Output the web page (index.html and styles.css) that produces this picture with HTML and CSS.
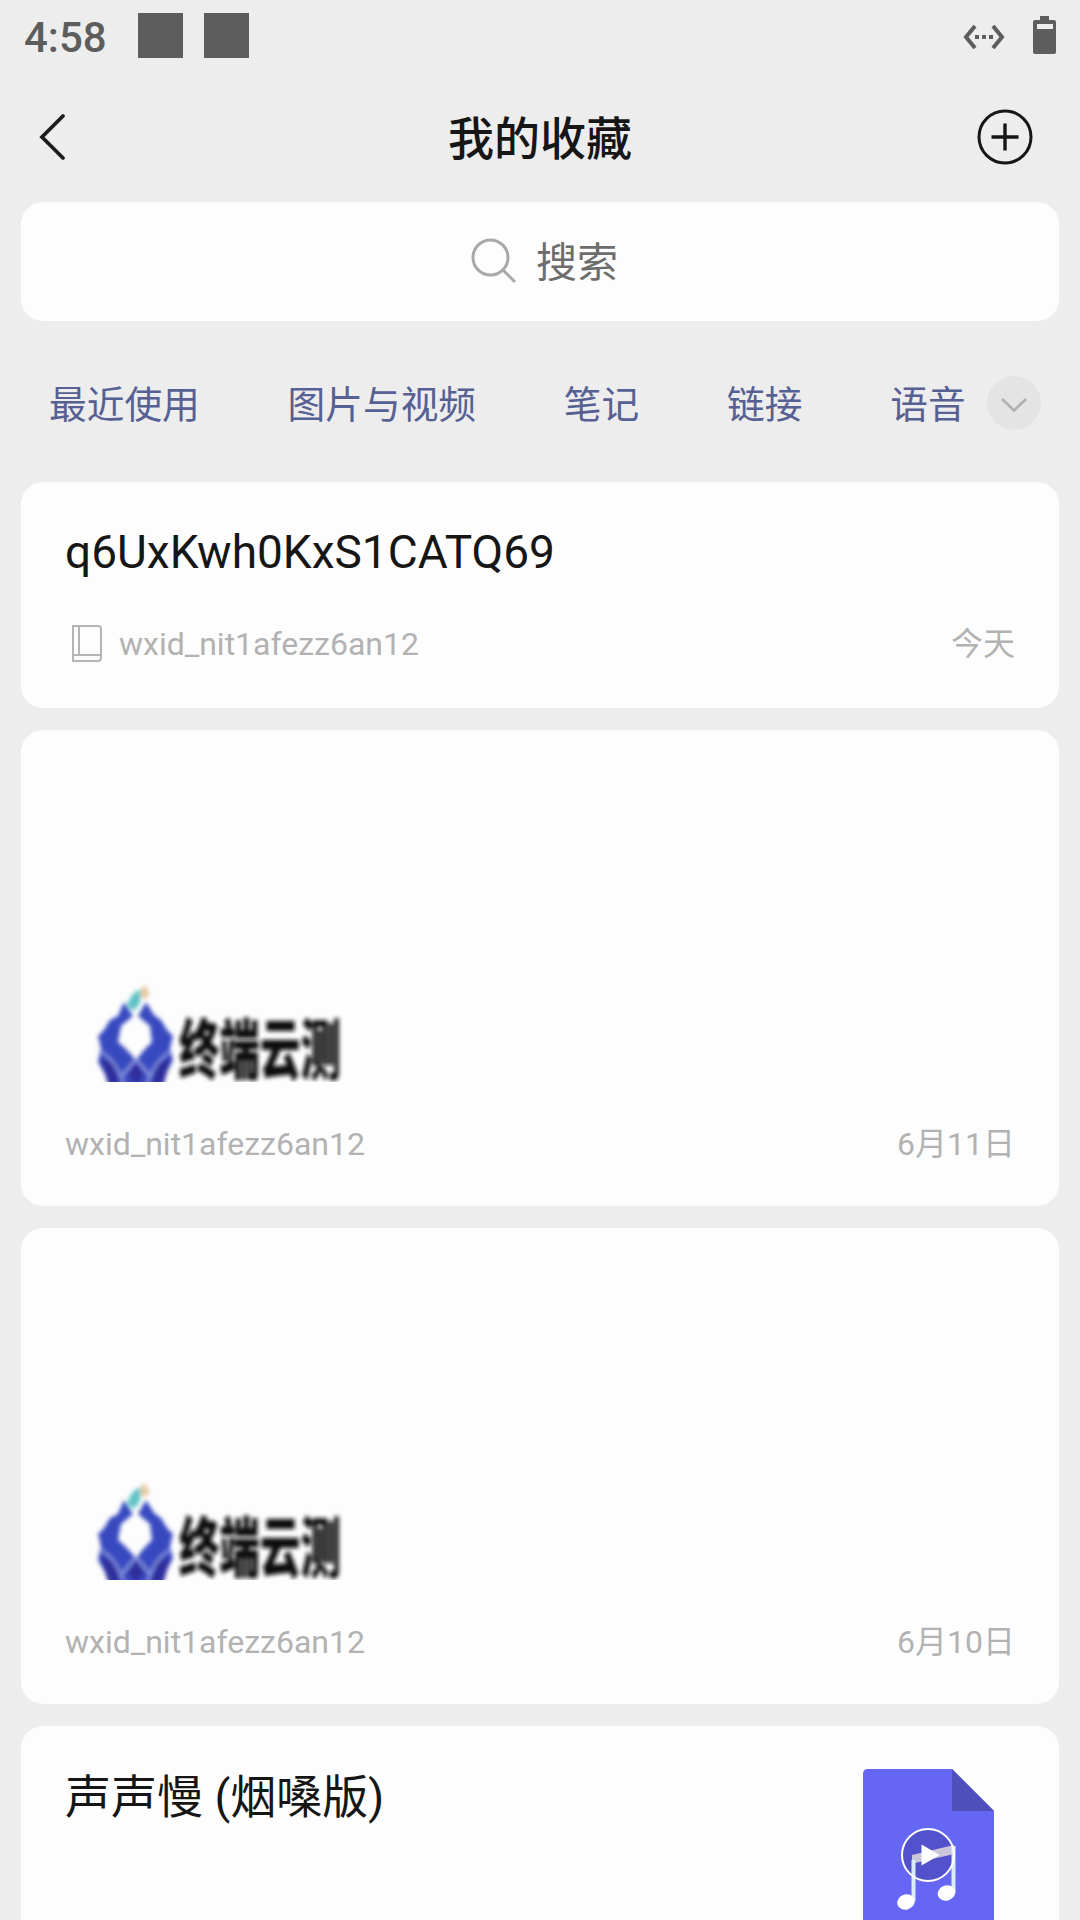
FILE: index.html
```html
<!DOCTYPE html>
<html lang="zh-CN">
<head>
<meta charset="utf-8">
<title>我的收藏</title>
<link rel="stylesheet" href="styles.css">
</head>
<body>
<svg class="defs" width="0" height="0" aria-hidden="true">
  <defs>
    <filter id="soft" x="-5%" y="-5%" width="110%" height="110%"><feGaussianBlur stdDeviation="1.9"/></filter>
    <clipPath id="crop"><rect x="0" y="0" width="300" height="100"/></clipPath>
    <symbol id="brand" viewBox="0 0 300 110">
      <g clip-path="url(#crop)">
        <g filter="url(#soft)">
          <path d="M59 20 L68 34 L56 44 L53 60 L60 66 L71 78 L80 67 L87 60 L85 44 L73 34 L81 20 L89 33 L96 38 L102 48 L108 54 L105 66 L108 78 L101 92 L98 104 H44 L40 92 L33 80 L36 66 L33 54 L39 48 L45 38 L53 34Z" fill="#374ac0"/>
          <path d="M35 76 L49 82 L55 104 H44Z M106 76 L92 82 L86 104 H98Z M71 80 L79 92 L71 104 L63 92Z" fill="#2f2d9c"/>
          <path d="M35 69 Q53 80 59 104 M106 69 Q88 80 82 104 M71 77 L57 94 M71 77 L85 94" stroke="#97a4e6" stroke-width="2" fill="none"/>
          <path d="M62 24 Q65 11 76 7 L75 21 L69 29Z" fill="#5fc3c6"/>
          <path d="M79 2 L85 12 L79 18 L75 12Z" fill="#e4c9a0"/>
          <text class="brand-text" transform="translate(114 92) scale(1 1.640)">终端云测</text>
        </g>
      </g>
    </symbol>
  </defs>
</svg>
<div class="screen">
  <div class="status">
    <span class="clock">4:58</span>
    <span class="notice"></span>
    <span class="notice"></span>
    <svg class="ethernet" width="44" height="28" viewBox="0 0 44 28" fill="none" stroke="#5d5d5d" stroke-width="4">
      <path d="M13 3 L4 14 L13 25 M31 3 L40 14 L31 25"/>
      <path d="M13 14h4M20 14h4M27 14h4"/>
    </svg>
    <svg class="battery" width="23" height="38" viewBox="0 0 23 38"><path fill="#5d5d5d" fill-rule="evenodd" d="M7 0h9v4h5a2 2 0 0 1 2 2v30a2 2 0 0 1-2 2H2a2 2 0 0 1-2-2V6a2 2 0 0 1 2-2h5zM4 8v5h16V8z"/></svg>
  </div>
  <header class="nav">
    <svg width="30" height="50" viewBox="0 0 30 50" fill="none" stroke="#1e1e1e" stroke-width="3.800" stroke-linecap="round"><path d="M25 4 L4 25 L25 46"/></svg>
    <h1>我的收藏</h1>
    <svg width="56" height="56" viewBox="0 0 56 56" fill="none" stroke="#161616" stroke-width="3"><circle cx="28" cy="28" r="26"/><path d="M14.500 28h27M28 14.500v27" stroke-width="3.400"/></svg>
  </header>
  <div class="search">
    <svg width="48" height="48" viewBox="0 0 48 48" fill="none" stroke="#a8a8a8" stroke-width="3"><circle cx="21.500" cy="21.500" r="17.500"/><path d="M34 34 L46 46"/></svg>
    <span>搜索</span>
  </div>
  <nav class="tabs">
    <span>最近使用</span><span>图片与视频</span><span>笔记</span><span>链接</span><span>语音</span>
    <svg width="54" height="54" viewBox="0 0 54 54"><circle cx="27" cy="27" r="27" fill="#e4e4e4"/><path d="M15 23 L27 34.500 L39 23" fill="none" stroke="#b0b0b0" stroke-width="2.600"/></svg>
  </nav>
  <main class="list">
    <article class="card note">
      <h2>q6UxKwh0KxS1CATQ69</h2>
      <div class="meta">
        <svg class="book" width="54" height="40" viewBox="0 0 54 40" fill="none" stroke="#b5b5b5" stroke-width="2"><path d="M8 2h25a3 3 0 0 1 3 3v29a3 3 0 0 1-3 3H8zM14 2v29M8 31h28"/></svg>
        <span>wxid_nit1afezz6an12</span><time>今天</time>
      </div>
    </article>
    <article class="card picture">
      <svg class="logo" width="300" height="110"><use href="#brand"/></svg>
      <div class="meta"><span>wxid_nit1afezz6an12</span><time>6月11日</time></div>
    </article>
    <article class="card picture">
      <svg class="logo" width="300" height="110"><use href="#brand"/></svg>
      <div class="meta"><span>wxid_nit1afezz6an12</span><time>6月10日</time></div>
    </article>
    <article class="card song">
      <h2>声声慢 (烟嗓版)</h2>
      <svg width="131" height="170" viewBox="0 0 131 170">
        <path d="M5 0H89L131 42V170H0V5Q0 0 5 0Z" fill="#6666f4"/>
        <path d="M89 0L131 42H89Z" fill="#5050bd"/>
        <circle cx="65" cy="86" r="26" fill="#5252cc"/>
        <path d="M49 86L91 76V85L52 94V131H49Z" fill="#cbc5d9"/>
        <path d="M50.500 91V132M90.500 77V124" stroke="#d9ecff" stroke-width="4"/>
        <ellipse cx="43" cy="133" rx="9" ry="7.500" transform="rotate(-18 43 133)" fill="#fff"/>
        <ellipse cx="83.500" cy="124" rx="9" ry="7.500" transform="rotate(-18 83.500 124)" fill="#fff"/>
        <circle cx="65" cy="86" r="26" fill="none" stroke="#fff" stroke-width="2"/>
        <path d="M58.500 75.500L76.500 86L58.500 96.500Z" fill="#fff"/>
      </svg>
    </article>
  </main>
</div>
</body>
</html>
```
FILE: styles.css
```css
* { box-sizing: border-box; margin: 0; padding: 0; }
body {
  background: #ededed;
  font-family: Roboto, "Noto Sans CJK SC", sans-serif;
  color: #161616;
}
svg { display: block; flex: none; }
.defs { position: absolute; }
.screen {
  width: 1080px;
  height: 1920px;
  overflow: hidden;
  display: flex;
  flex-direction: column;
}
.screen > * { flex: none; }
.status {
  height: 72px;
  padding: 0 24px;
  display: flex;
  align-items: center;
  color: #5d5d5d;
}
.clock { width: 93px; font-size: 42px; font-weight: 500; line-height: 50px; margin-top: 4px; }
.notice { width: 45px; height: 45px; margin: 0 0 1px 21px; background: #5d5d5d; }
.ethernet { margin-left: auto; margin-right: 27px; margin-top: 1px; }
.battery { margin-bottom: 2px; }
.nav {
  height: 130px;
  padding: 0 47px 0 38px;
  display: grid;
  grid-template-columns: 56px 1fr 56px;
  align-items: center;
}
.nav h1 { font-size: 46px; font-weight: 500; line-height: 60px; text-align: center; padding: 4px 0 0 9px; }
.search {
  margin: 0 21px;
  height: 119px;
  border-radius: 22px;
  background: #fdfdfd;
  display: flex;
  align-items: center;
  padding: 0 0 3px 448px;
  gap: 19px;
  color: #6d6d6d;
  font-size: 41px;
}
.search span { margin-bottom: 2px; }
.tabs {
  height: 161px;
  padding: 0 39px 0 49px;
  display: flex;
  align-items: center;
  gap: 87.8px;
  font-size: 37.7px;
  color: #576092;
  white-space: nowrap;
}
.tabs svg { margin-left: auto; margin-top: 2px; }
.tabs span:last-of-type { margin-right: -88px; }
.list { display: flex; flex-direction: column; gap: 22px; }
.card {
  margin: 0 21px;
  padding: 0 44px;
  border-radius: 22px;
  background: #fdfdfd;
}
.card h2 { font-size: 46px; font-weight: 400; line-height: 60px; }
.meta {
  display: flex;
  align-items: center;
  height: 40px;
  font-size: 32px;
  line-height: 40px;
  color: #b2b2b2;
}
.meta time { margin-left: auto; }
.note { height: 226px; padding-top: 40px; }
.note .meta { margin-top: 42px; }
.picture { height: 476px; padding-top: 252px; }
.picture .meta { margin-top: 32px; }
.brand-text { font-family: "Noto Sans CJK SC", sans-serif; font-size: 40.5px; font-weight: 900; fill: #111; }
.song { height: 240px; padding: 43px 65px 0 44px; display: flex; justify-content: space-between; }
.song h2 { margin-top: -2px; }
```
